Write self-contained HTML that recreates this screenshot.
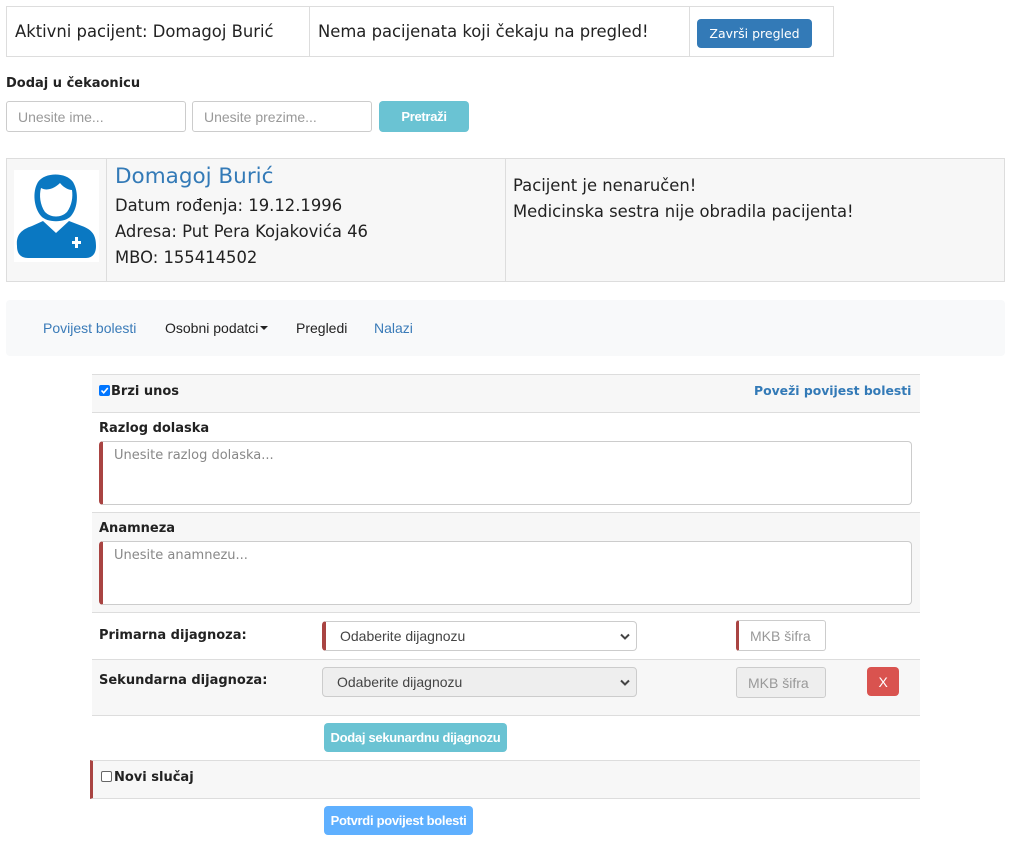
<!DOCTYPE html>
<html><head><meta charset="utf-8"><style>
*{box-sizing:border-box;margin:0;padding:0}
body{width:1015px;height:844px;background:#fff;font-family:"DejaVu Sans",Verdana,sans-serif;color:#333;position:relative;overflow:hidden}
.a{position:absolute}
.ar{font-family:"Liberation Sans",Arial,sans-serif}
.inp{position:absolute;border:1px solid #ccc;border-radius:3px;background:#fff;font-family:"Liberation Sans",Arial,sans-serif;font-size:14px;color:#999;padding-left:11px;display:flex;align-items:center}
.btn{position:absolute;border-radius:4px;color:#fff;font-family:"Liberation Sans",Arial,sans-serif;font-size:13px;display:flex;align-items:center;justify-content:center;letter-spacing:-0.3px}
.lbl{position:absolute;font-weight:bold;font-size:13px;color:#222}
.row{position:absolute;left:92px;width:828px;border-top:1px solid #ddd}
.g{background:#f7f7f7}
.ta{position:absolute;left:99px;width:813px;height:64px;border:1px solid #ccc;border-left:4px solid #a94442;border-radius:4px;background:#fff;font-size:13px;color:#888;padding:6px 0 0 11px}
.sel{position:absolute;left:322px;width:315px;height:30px;border:1px solid #ccc;border-radius:4px;font-family:"Liberation Sans",Arial,sans-serif;font-size:14px;color:#444;display:flex;align-items:center}
.sel svg{position:absolute;right:6px;top:11px}
.t{font-size:16.4px;color:#222}
</style></head><body>
<!-- top table -->
<div class="a" style="left:6px;top:6px;width:828px;height:51px;border:1px solid #ddd"></div>
<div class="a" style="left:309px;top:6px;width:1px;height:51px;background:#ddd"></div>
<div class="a" style="left:689px;top:6px;width:1px;height:51px;background:#ddd"></div>
<div class="a t" style="left:15px;top:22px">Aktivni pacijent: Domagoj Burić</div>
<div class="a t" style="left:318px;top:22px">Nema pacijenata koji čekaju na pregled!</div>
<div class="btn" style="left:697px;top:19px;width:115px;height:29px;background:#337ab7;font-family:'DejaVu Sans',sans-serif;font-size:12.5px;letter-spacing:0">Završi pregled</div>

<div class="lbl" style="left:6px;top:76px">Dodaj u čekaonicu</div>
<div class="inp" style="left:6px;top:101px;width:180px;height:31px">Unesite ime...</div>
<div class="inp" style="left:192px;top:101px;width:180px;height:31px">Unesite prezime...</div>
<div class="btn" style="left:379px;top:101px;width:90px;height:31px;background:#6ac3d3;font-weight:bold">Pretraži</div>

<!-- patient -->
<div class="a" style="left:6px;top:158px;width:999px;height:124px;border:1px solid #ddd;background:#f7f7f7"></div>
<div class="a" style="left:106px;top:159px;width:1px;height:122px;background:#ddd"></div>
<div class="a" style="left:505px;top:159px;width:1px;height:122px;background:#ddd"></div>
<div class="a" style="left:14px;top:170px;width:85px;height:92px;background:#fff"></div>
<svg class="a" style="left:14px;top:170px" width="85" height="92" viewBox="0 0 85 92">
<path d="M3 76 C2 66 6 60 18 56 L29 51 L42 63 L55 51 L68 56 C79 60 82 66 82 76 C82 84 78 88 72 88 L14 88 C7 88 3 84 3 76Z" fill="#0a78c2"/>
<path d="M27 46 C20 38 18 22 24 12 C31 2 52 2 59 12 C65 22 64 38 57 46 C51 53 33 53 27 46Z" fill="#0a78c2"/>
<path d="M31 42 C26 35 25 25 27 18 C34 22 42 17 46 13 C50 18 55 20 58 20 C59 27 58 35 53 42 C47 48 37 48 31 42Z" fill="#fff"/>
<path d="M58 71 h3 v-4 h3 v4 h3 v3 h-3 v4 h-3 v-4 h-3z" fill="#fff"/>
</svg>
<div class="a" style="left:115px;top:164px;font-size:21.5px;color:#337ab7">Domagoj Burić</div>
<div class="a t" style="left:115px;top:196px">Datum rođenja: 19.12.1996</div>
<div class="a t" style="left:115px;top:222px">Adresa: Put Pera Kojakovića 46</div>
<div class="a t" style="left:115px;top:248px">MBO: 155414502</div>
<div class="a t" style="left:513px;top:176px">Pacijent je nenaručen!</div>
<div class="a t" style="left:513px;top:202px">Medicinska sestra nije obradila pacijenta!</div>

<!-- nav -->
<div class="a" style="left:6px;top:300px;width:999px;height:56px;background:#f8f9fa;border-radius:4px"></div>
<div class="a ar" style="left:43px;top:320px;font-size:14px;color:#3a7bb8">Povijest bolesti</div>
<div class="a ar" style="left:165px;top:320px;font-size:14px;color:#222">Osobni podatci<span style="display:inline-block;width:0;height:0;border-left:4px solid transparent;border-right:4px solid transparent;border-top:4px solid #222;margin-left:2px;position:relative;top:-3px"></span></div>
<div class="a ar" style="left:296px;top:320px;font-size:14px;color:#222">Pregledi</div>
<div class="a ar" style="left:374px;top:320px;font-size:14px;color:#3a7bb8">Nalazi</div>

<!-- form -->
<div class="row g" style="top:374px;height:39px"></div>
<div class="a" style="left:99px;top:385px;width:11px;height:11px;background:#0075ff;border-radius:2px"></div>
<svg class="a" style="left:99px;top:385px" width="11" height="11"><path d="M2.5 5.5 L4.7 7.8 L8.8 3" stroke="#fff" stroke-width="1.6" fill="none"/></svg>
<div class="lbl" style="left:111px;top:384px">Brzi unos</div>
<div class="lbl" style="left:754px;top:383px;color:#337ab7;font-size:12.4px">Poveži povijest bolesti</div>

<div class="row" style="top:412px;height:101px"></div>
<div class="lbl" style="left:99px;top:421px">Razlog dolaska</div>
<div class="ta" style="top:441px">Unesite razlog dolaska...</div>

<div class="row g" style="top:512px;height:101px"></div>
<div class="lbl" style="left:99px;top:521px">Anamneza</div>
<div class="ta" style="top:541px">Unesite anamnezu...</div>

<div class="row" style="top:612px;height:48px"></div>
<div class="lbl" style="left:99px;top:628px">Primarna dijagnoza:</div>
<div class="sel" style="top:621px;background:#fff;border-left:4px solid #a94442;padding-left:14px">Odaberite dijagnozu<svg width="10" height="8"><path d="M1 1.5 L5 5.5 L9 1.5" stroke="#444" stroke-width="2" fill="none"/></svg></div>
<div class="inp" style="left:736px;top:620px;width:90px;height:31px;border-left:3px solid #a94442;color:#999">MKB šifra</div>

<div class="row g" style="top:659px;height:57px"></div>
<div class="lbl" style="left:99px;top:673px">Sekundarna dijagnoza:</div>
<div class="sel" style="top:667px;background:#eee;padding-left:14px">Odaberite dijagnozu<svg width="10" height="8"><path d="M1 1.5 L5 5.5 L9 1.5" stroke="#444" stroke-width="2" fill="none"/></svg></div>
<div class="inp" style="left:736px;top:667px;width:90px;height:31px;background:#eee;color:#999">MKB šifra</div>
<div class="btn" style="left:867px;top:667px;width:32px;height:29px;background:#d9534f;font-size:14px">X</div>

<div class="row" style="top:715px;height:1px"></div>
<div class="btn" style="left:324px;top:723px;width:183px;height:29px;background:#6ac3d3;font-weight:bold">Dodaj sekunardnu dijagnozu</div>

<div class="row g" style="top:760px;height:39px;left:90px;width:830px;border-left:3px solid #a94442;border-bottom:1px solid #ddd"></div>
<div class="a" style="left:101px;top:771px;width:11px;height:11px;border:1px solid #666;border-radius:2px;background:#fff"></div>
<div class="lbl" style="left:114px;top:770px">Novi slučaj</div>

<div class="btn" style="left:324px;top:806px;width:149px;height:29px;background:#5fb0ff;font-weight:bold">Potvrdi povijest bolesti</div>
</body></html>
